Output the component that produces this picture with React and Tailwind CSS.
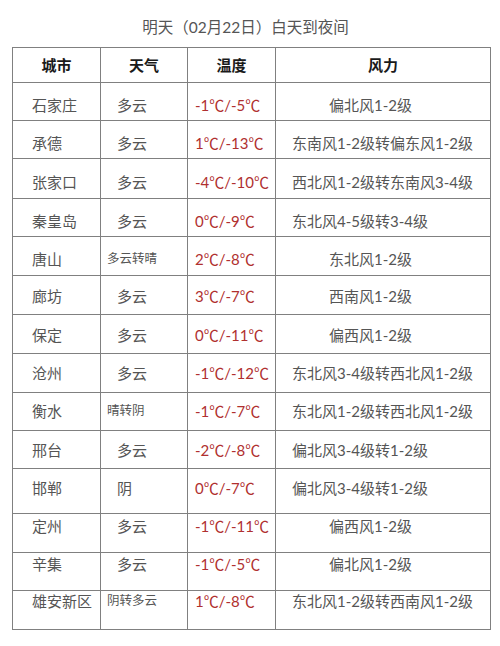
import React from 'react';

const rows = [
    { city: '石家庄', weather: '多云', temp: '-1℃/-5℃', wind: '偏北风1-2级', h: 'h-[38px]', pt: 'pt-[12px]', short: true },
    { city: '承德', weather: '多云', temp: '1℃/-13℃', wind: '东南风1-2级转偏东风1-2级', h: 'h-[38px]', pt: 'pt-[12px]' },
    { city: '张家口', weather: '多云', temp: '-4℃/-10℃', wind: '西北风1-2级转东南风3-4级', h: 'h-[40px]', pt: 'pt-[13px]' },
    { city: '秦皇岛', weather: '多云', temp: '0℃/-9℃', wind: '东北风4-5级转3-4级', h: 'h-[38px]', pt: 'pt-[12px]' },
    { city: '唐山', weather: '多云转晴', temp: '2℃/-8℃', wind: '东北风1-2级', h: 'h-[39px]', pt: 'pt-[12px]', small: true, short: true },
    { city: '廊坊', weather: '多云', temp: '3℃/-7℃', wind: '西南风1-2级', h: 'h-[39px]', pt: 'pt-[10px]', short: true },
    { city: '保定', weather: '多云', temp: '0℃/-11℃', wind: '偏西风1-2级', h: 'h-[39px]', pt: 'pt-[10px]', short: true },
    { city: '沧州', weather: '多云', temp: '-1℃/-12℃', wind: '东北风3-4级转西北风1-2级', h: 'h-[39px]', pt: 'pt-[9px]' },
    { city: '衡水', weather: '晴转阴', temp: '-1℃/-7℃', wind: '东北风1-2级转西北风1-2级', h: 'h-[38px]', pt: 'pt-[8px]', small: true },
    { city: '邢台', weather: '多云', temp: '-2℃/-8℃', wind: '偏北风3-4级转1-2级', h: 'h-[38px]', pt: 'pt-[9px]' },
    { city: '邯郸', weather: '阴', temp: '0℃/-7℃', wind: '偏北风3-4级转1-2级', h: 'h-[45px]', pt: 'pt-[9px]' },
    { city: '定州', weather: '多云', temp: '-1℃/-11℃', wind: '偏西风1-2级', h: 'h-[39px]', pt: 'pt-[2px]', short: true },
    { city: '辛集', weather: '多云', temp: '-1℃/-5℃', wind: '偏北风1-2级', h: 'h-[38px]', pt: 'pt-[1px]', short: true },
    { city: '雄安新区', weather: '阴转多云', temp: '1℃/-8℃', wind: '东北风1-2级转西南风1-2级', h: 'h-[39px]', pt: 'pt-[0px]', small: true },
];

const font = { fontFamily: 'Lato, "Noto Sans CJK SC", sans-serif' };

const App = () => {
    return (
        <div className="w-[500px] h-[646px] bg-white text-[#555]" style={font}>
            {/* Title */}
            <div className="pt-[17px] pb-[10px] pr-[9px] text-center text-[15.5px] leading-[20px] text-[#555]">
                明天（02月22日）白天到夜间
            </div>

            {/* Table */}
            <div className="ml-[12px] w-[479px] border-l border-t border-[#808080] text-[15px] leading-[20px]">
                <div className="grid grid-cols-[88px_87px_88px_215px] h-[35px] font-bold text-[#1a1a1a]">
                    <div className="flex items-center justify-center border-r border-b border-[#808080]">城市</div>
                    <div className="flex items-center justify-center border-r border-b border-[#808080]">天气</div>
                    <div className="flex items-center justify-center border-r border-b border-[#808080]">温度</div>
                    <div className="flex items-center justify-center border-r border-b border-[#808080]">风力</div>
                </div>

                {rows.map((r) => (
                    <div key={r.city} className={`grid grid-cols-[88px_87px_88px_215px] ${r.h}`}>
                        <div className={`border-r border-b border-[#808080] pl-[19px] whitespace-nowrap ${r.pt}`}>{r.city}</div>
                        <div
                            className={`border-r border-b border-[#808080] whitespace-nowrap ${r.pt} ${
                                r.small ? 'pl-[6px] text-[12.5px]' : 'pl-[16px]'
                            }`}
                        >
                            {r.weather}
                        </div>
                        <div className={`border-r border-b border-[#808080] pl-[7px] whitespace-nowrap text-[#b0302f] ${r.pt}`}>
                            {r.temp}
                        </div>
                        <div
                            className={`border-r border-b border-[#808080] whitespace-nowrap ${r.pt} ${
                                r.short ? 'pl-[53px]' : 'pl-[16px]'
                            }`}
                        >
                            {r.wind}
                        </div>
                    </div>
                ))}
            </div>
        </div>
    );
};

export default App;
